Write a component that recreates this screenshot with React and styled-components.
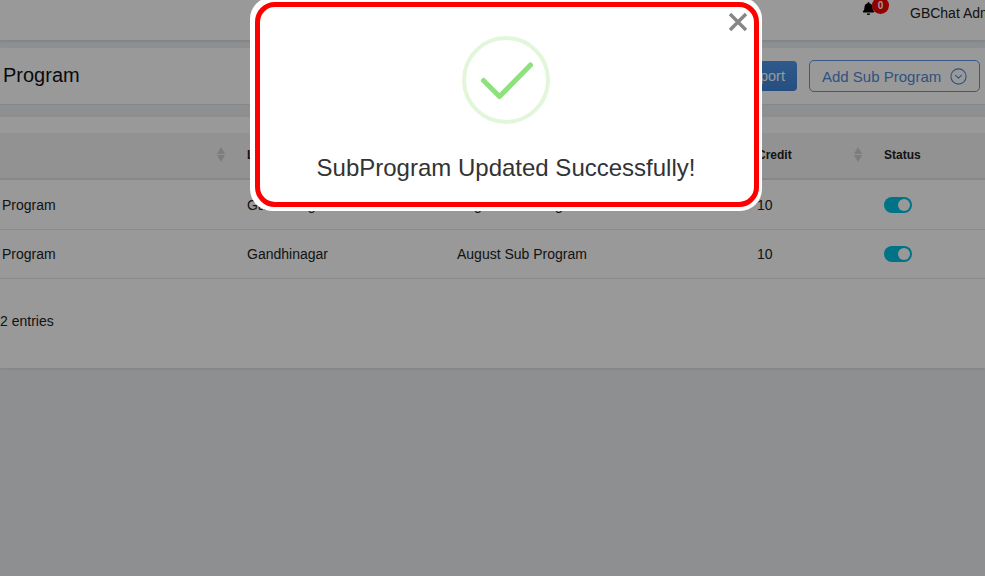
import React from 'react'
import styled, { createGlobalStyle } from 'styled-components'
import { FaBell } from 'react-icons/fa'

const Global = createGlobalStyle`
  html, body { margin: 0; padding: 0; height: 100%; overflow: hidden; }
  body { background: #eceef1; font-family: "Liberation Sans", Arial, sans-serif; color: #222; }
`
const Page = styled.div`
  width: 985px;
  height: 576px;
  overflow: hidden;
  background: #eceef1;
`
const TopBar = styled.header`
  height: 40px;
  background: #fff;
  box-shadow: 0 1px 3px rgba(0,0,0,.12);
  display: flex;
  justify-content: flex-end;
  white-space: nowrap;
`
const BellWrap = styled.div`
  position: relative;
  width: 48px;
  padding: 2px 0 0 862px;
  flex: none;
  color: #000;
  font-size: 13px;
  line-height: 0;
`
const Badge = styled.span`
  position: absolute;
  left: 872px;
  top: -3px;
  width: 17px;
  height: 17px;
  border-radius: 50%;
  background: #f00000;
  color: #fff;
  font-size: 10px;
  font-weight: 700;
  line-height: 17px;
  text-align: center;
`
const UserName = styled.div`
  flex: none;
  width: 75px;
  padding-top: 6px;
  font-size: 14px;
  line-height: 15px;
  color: #222;
  overflow: hidden;
`
const TitleCard = styled.section`
  margin-top: 8px;
  height: 57px;
  box-sizing: border-box;
  background: #fff;
  border-bottom: 1px solid #dfe2e6;
  display: flex;
  align-items: center;
  padding: 0 5px 0 4px;
`
const Title = styled.h1`
  margin: 0 0 2px -1px;
  flex: 1;
  font-size: 20px;
  font-weight: 400;
  color: #111;
`
const ExportButton = styled.button`
  height: 30px;
  width: 66px;
  margin-right: 12px;
  padding: 0;
  border: none;
  border-radius: 4px;
  background: linear-gradient(#4f95ea, #3f82d6);
  color: #fff;
  font: 14.5px "Liberation Sans", Arial, sans-serif;
`
const AddButton = styled.button`
  height: 32px;
  width: 171px;
  border: 1px solid #5c94dc;
  border-radius: 5px;
  background: #fff;
  color: #4f8ad6;
  font: 15px "Liberation Sans", Arial, sans-serif;
  display: flex;
  align-items: center;
  gap: 9px;
  padding: 0 0 0 12px;
`
const TableCard = styled.section`
  margin-top: 12px;
  height: 251px;
  background: #fff;
  padding-top: 16px;
  box-sizing: border-box;
  box-shadow: 0 1px 3px rgba(0,0,0,.08);
`
const Row = styled.div`
  display: grid;
  grid-template-columns: 247px 210px 300px 127px 1fr;
  align-items: center;
  box-sizing: border-box;
  height: ${p => p.$height}px;
  font-size: 14px;
  color: #222;
  background: ${p => (p.$head ? '#f3f3f3' : '#fff')};
  border-bottom: ${p => (p.$head ? '2px solid #dee2e6' : '1px solid #e6e6e6')};
  font-weight: ${p => (p.$head ? 700 : 400)};
  ${p => p.$head && 'font-size: 12px; padding-bottom: 2px;'}
`
const Cell = styled.div`
  padding-left: ${p => p.$pad || 0}px;
  position: relative;
  white-space: nowrap;
  min-height: 14px;
`
const Sort = styled.span`
  position: absolute;
  right: ${p => p.$right}px;
  top: 50%;
  margin-top: -8px;
  display: flex;
  flex-direction: column;
  gap: 1px;
  &::before, &::after {
    content: '';
    border-left: 4px solid transparent;
    border-right: 4px solid transparent;
  }
  &::before { border-bottom: 7px solid #d0d0d0; }
  &::after { border-top: 7px solid #d0d0d0; }
`
const Toggle = styled.span`
  display: block;
  width: 28px;
  height: 16px;
  border-radius: 8px;
  background: #00c0e0;
  position: relative;
  &::after {
    content: '';
    position: absolute;
    right: 2px;
    top: 2px;
    width: 12px;
    height: 12px;
    border-radius: 50%;
    background: #fff;
  }
`
const Entries = styled.div`
  font-size: 14px;
  line-height: 16px;
  padding-top: 34px;
  color: #222;
`
const Overlay = styled.div`
  position: fixed;
  inset: 0;
  background: rgba(0,0,0,.4);
`
const Modal = styled.div`
  position: absolute;
  left: 250px;
  top: -3px;
  width: 512px;
  height: 214px;
  box-sizing: border-box;
  padding: 5px 3px 4px 5px;
  background: #fff;
  border-radius: 22px;
`
const ModalInner = styled.div`
  position: relative;
  height: 100%;
  box-sizing: border-box;
  border: 5px solid #ff0000;
  border-radius: 20px;
  display: flex;
  flex-direction: column;
  align-items: center;
  padding: 29px 2px 0 0;
`
const Close = styled.button`
  position: absolute;
  right: 4px;
  top: 3px;
  width: 24px;
  height: 24px;
  padding: 0;
  border: none;
  background: none;
  line-height: 0;
`
const Message = styled.p`
  margin: 30px 0 0;
  font-size: 24px;
  line-height: 28px;
  color: #333;
  white-space: nowrap;
`

const ChevronCircle = () => (
  <svg width="17" height="17" viewBox="0 0 17 17" fill="none" stroke="#4f8ad6" strokeWidth="1.1">
    <circle cx="8.5" cy="8.5" r="7.6" />
    <path d="M5.6 7.4 8.5 10.2 11.4 7.4" strokeLinecap="round" strokeLinejoin="round" />
  </svg>
)

const rows = [1, 2]

const App = () => (
  <Page>
    <Global />
    <TopBar>
      <BellWrap>
        <FaBell />
        <Badge>0</Badge>
      </BellWrap>
      <UserName>GBChat Admin</UserName>
    </TopBar>
    <TitleCard>
      <Title>Program</Title>
      <ExportButton>Export</ExportButton>
      <AddButton>Add Sub Program <ChevronCircle /></AddButton>
    </TitleCard>
    <TableCard>
      <Row $head $height={47}>
        <Cell $pad={2}><Sort $right={22} /></Cell>
        <Cell>Location</Cell>
        <Cell>Sub Program</Cell>
        <Cell>Credit<Sort $right={22} /></Cell>
        <Cell>Status</Cell>
      </Row>
      {rows.map(r => (
        <Row key={r} $height={r === 1 ? 50 : 49}>
          <Cell $pad={2}>Program</Cell>
          <Cell>Gandhinagar</Cell>
          <Cell>August Sub Program</Cell>
          <Cell>10</Cell>
          <Cell><Toggle /></Cell>
        </Row>
      ))}
      <Entries>2 entries</Entries>
    </TableCard>
    <Overlay>
      <Modal>
        <ModalInner>
          <Close aria-label="Close">
            <svg width="24" height="24" viewBox="0 0 24 24" fill="none" stroke="#868686" strokeWidth="3.4">
              <path d="M4 4 20 20M20 4 4 20" />
            </svg>
          </Close>
          <svg width="88" height="88" viewBox="0 0 88 88" fill="none">
            <circle cx="44" cy="44" r="42" stroke="#e2f6da" strokeWidth="4" />
            <path d="M21.5 44.5 37.5 60.5 68.5 29" stroke="#8fe07e" strokeWidth="5" strokeLinecap="round" strokeLinejoin="round" />
          </svg>
          <Message>SubProgram Updated Successfully!</Message>
        </ModalInner>
      </Modal>
    </Overlay>
  </Page>
)

export default App
